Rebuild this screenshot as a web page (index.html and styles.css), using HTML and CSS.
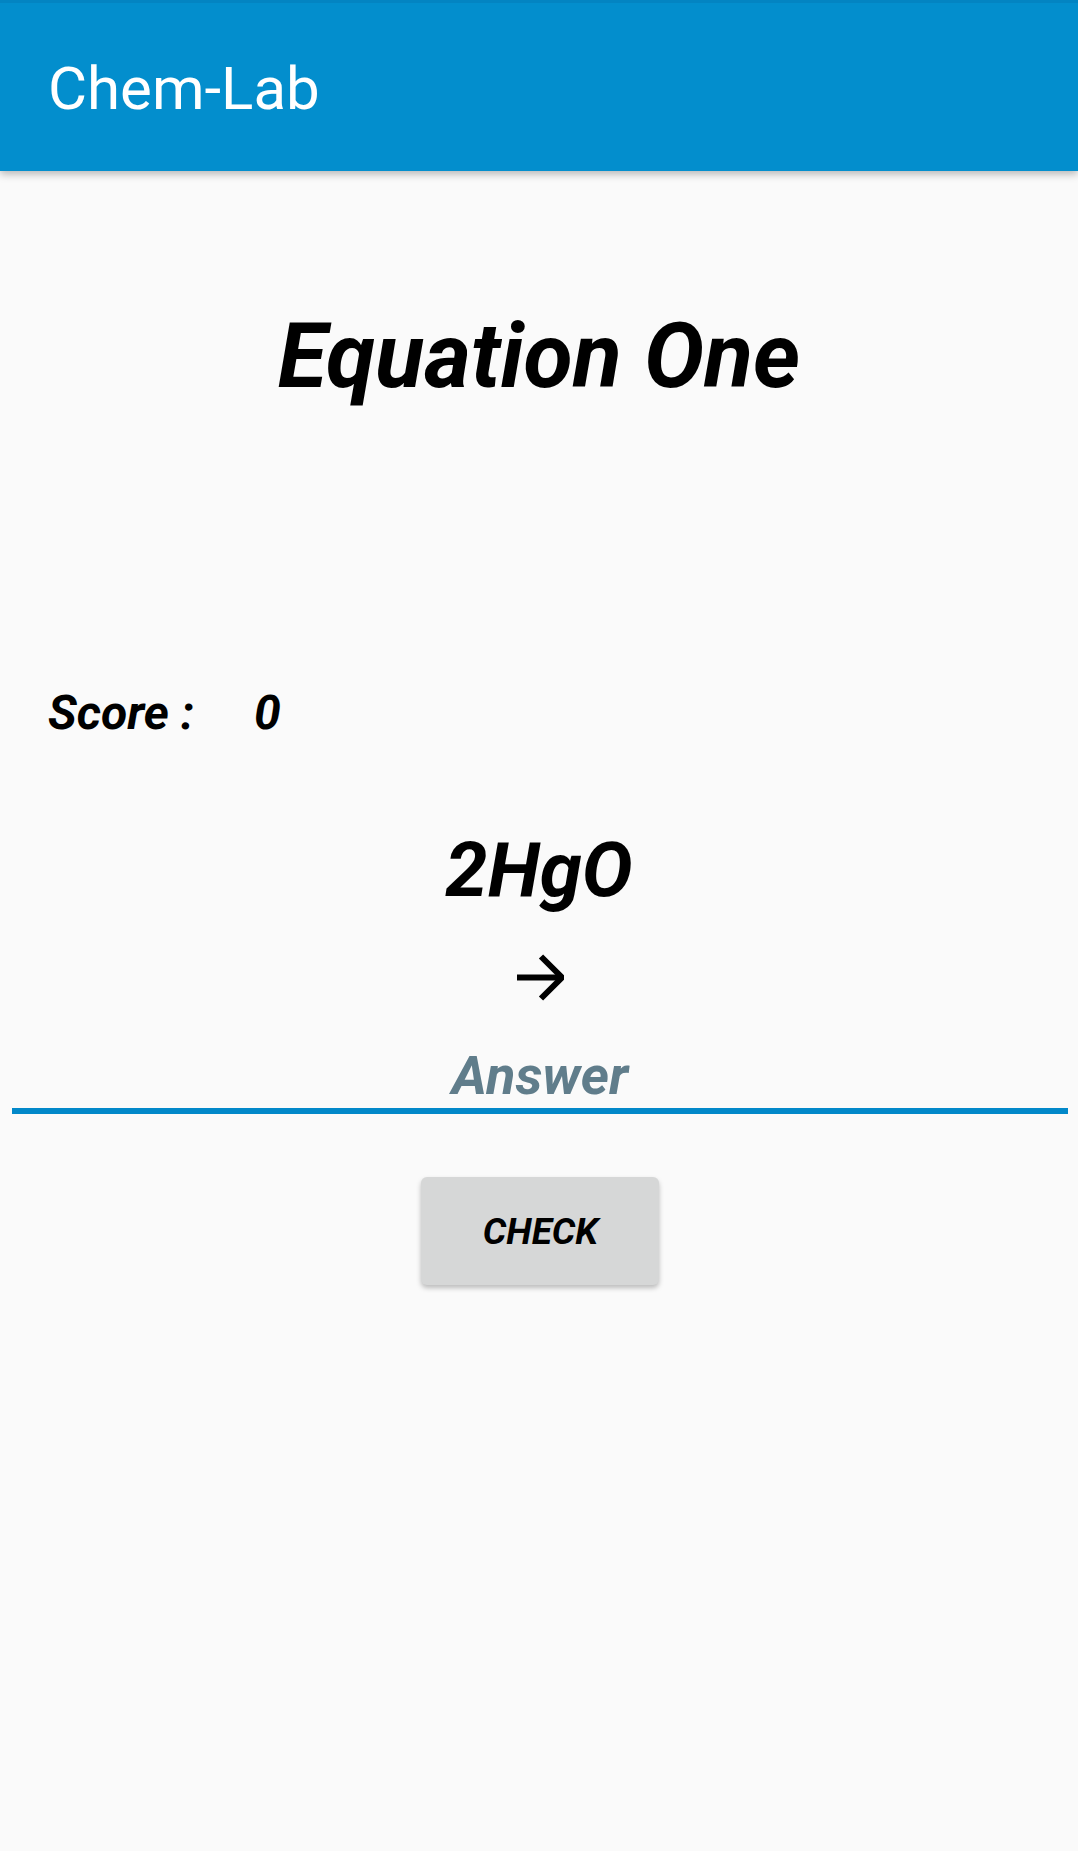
FILE: index.html
```html
<!DOCTYPE html>
<html>
<head>
<meta charset="utf-8">
<link rel="stylesheet" href="styles.css">
</head>
<body>
<header class="appbar">
  <div class="appbar-title">Chem-Lab</div>
</header>
<main class="content">
  <h1 class="eq-title">Equation One</h1>
  <div class="score-row">
    <span class="score-label">Score :</span>
    <span class="score-value">0</span>
  </div>
  <div class="reactant">2HgO</div>
  <div class="arrow-wrap">
    <svg class="arrow" width="48" height="48" viewBox="0 0 48 48">
      <path d="M1 24.5 H45" stroke="#000" stroke-width="6" fill="none"/>
      <path d="M25 3.5 L46 24.5 L25 45.5" stroke="#000" stroke-width="6" fill="none" stroke-linejoin="miter"/>
    </svg>
  </div>
  <div class="answer-field">
    <div class="answer-hint">Answer</div>
    <div class="answer-line"></div>
  </div>
  <div class="button-row">
    <button class="check-btn">CHECK</button>
  </div>
</main>
</body>
</html>
```

FILE: styles.css
```css
html, body {
  margin: 0;
  padding: 0;
  background: #fafafa;
}
body {
  width: 1078px;
  min-height: 1851px;
  font-family: Roboto, "Liberation Sans", sans-serif;
  color: #000;
}
.appbar {
  position: relative;
  z-index: 2;
  height: 171px;
  box-sizing: border-box;
  padding: 59px 0 0 48px;
  background: #038ecd;
  border-top: 3px solid #0384c2;
  box-shadow: 0 3px 8px rgba(0, 0, 0, 0.28);
}
.appbar-title {
  margin-top: -3px;
  font-size: 60px;
  line-height: 60px;
  font-weight: 400;
  color: #fff;
}
.content {
  display: flex;
  flex-direction: column;
  align-items: stretch;
}
.eq-title {
  margin: 141px 0 0 0;
  font-size: 90px;
  line-height: 90px;
  font-weight: 700;
  font-style: italic;
  text-align: center;
}
.score-row {
  margin-top: 287px;
  padding-left: 48px;
  display: flex;
  font-size: 48px;
  line-height: 48px;
  font-weight: 700;
  font-style: italic;
}
.score-value {
  margin-left: 60px;
}
.reactant {
  margin-top: 95px;
  font-size: 76px;
  line-height: 76px;
  font-weight: 700;
  font-style: italic;
  text-align: center;
}
.arrow-wrap {
  margin-top: 45px;
  display: flex;
  justify-content: center;
  height: 48px;
}
.arrow {
  display: block;
  margin-left: 1px;
}
.answer-field {
  margin: 48px 10px 0 12px;
}
.answer-hint {
  font-size: 54px;
  line-height: 54px;
  font-weight: 700;
  font-style: italic;
  color: #607d8b;
  text-align: center;
}
.answer-line {
  margin-top: 5px;
  height: 6px;
  background: #0288c9;
}
.button-row {
  margin-top: 63px;
  display: flex;
  justify-content: center;
}
.check-btn {
  width: 238px;
  height: 108px;
  margin-left: 1px;
  border: none;
  border-radius: 6px;
  background: #d6d7d7;
  box-shadow: 0 3px 5px rgba(0, 0, 0, 0.25);
  font-family: Roboto, "Liberation Sans", sans-serif;
  font-size: 37px;
  font-weight: 700;
  font-style: italic;
  letter-spacing: 0;
  color: #000;
  padding: 0 0 0 2px;
}
```
